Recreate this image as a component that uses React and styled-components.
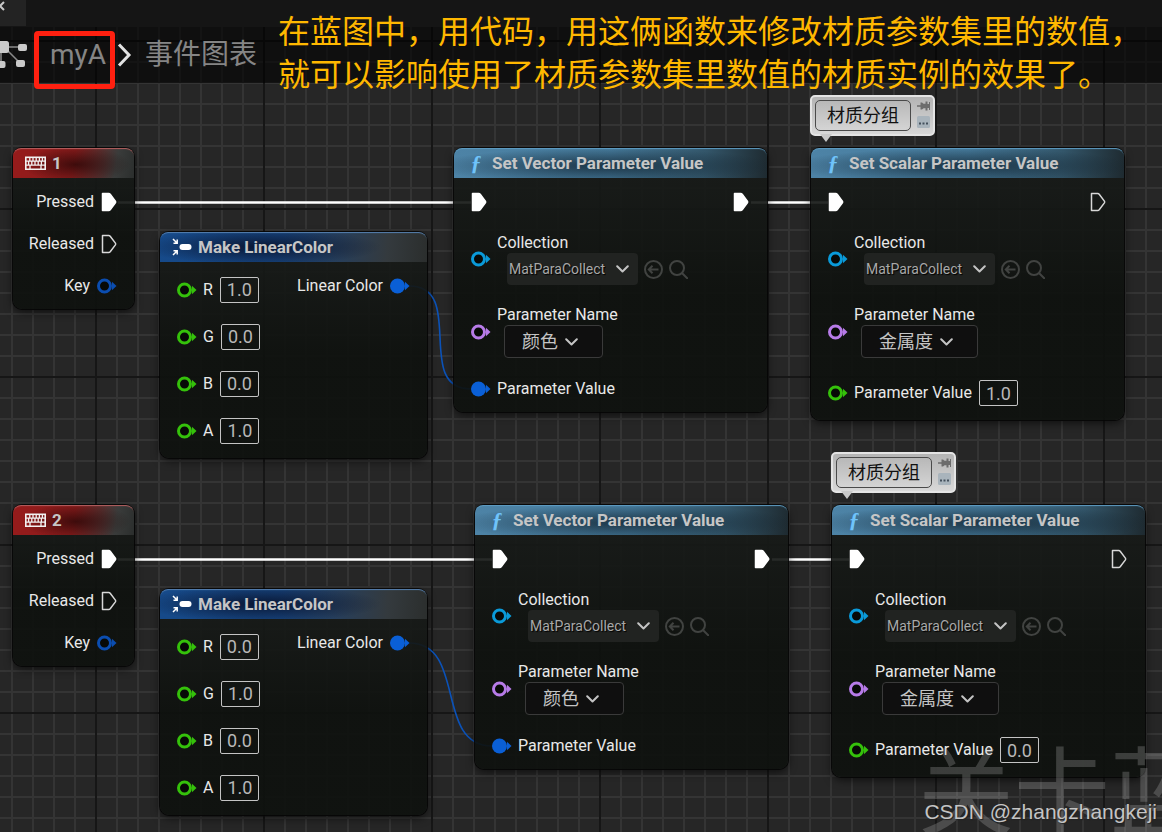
import React, { useState } from 'react'
import styled, { createGlobalStyle } from 'styled-components'

const Colors = {
  object: '#0a9ad9',
  name: '#b77be8',
  float: '#35c10b',
  struct: '#0a5fd6',
  key: '#0b4db0',
  text: '#e8e8e8',
  muted: '#b8b8b8',
}

const headers = {
  red: 'radial-gradient(ellipse 45% 60% at 52% 55%, rgba(30, 4, 4, 0.7), transparent), linear-gradient(100deg, #961b1b 0%, #8a1c1c 50%, #3a3c3b 84%, #2b2e2d 100%)',
  blue: 'radial-gradient(ellipse 45% 60% at 38% 50%, rgba(6, 12, 34, 0.8), transparent), linear-gradient(95deg, #164a8a 0%, #17437c 45%, #343a3e 85%, #2b2e2d 100%)',
  sky: 'radial-gradient(ellipse 55% 60% at 48% 60%, rgba(14, 30, 42, 0.75), transparent), linear-gradient(95deg, #4d83a6 0%, #467b9c 50%, #33566a 80%, #1e2a30 100%)',
}

const glows = {
  red: '#b56060',
  blue: '#5680b0',
  sky: '#5e9cc2',
}

const GlobalStyle = createGlobalStyle`
  * {
    box-sizing: border-box;
  }
  body {
    margin: 0;
    background: #262626;
    color: ${Colors.text};
    font: 16px/20px Roboto, "Noto Sans CJK SC", sans-serif;
  }
  button, input, select {
    font-family: inherit;
    margin: 0;
  }
  svg {
    flex-shrink: 0;
  }
`
const Graph = styled.main`
  position: relative;
  min-height: 100vh;
  overflow: hidden;
  background-color: #262626;
  background-image:
    linear-gradient(90deg, #161616 2px, transparent 2px),
    linear-gradient(#161616 2px, transparent 2px),
    linear-gradient(90deg, #343434 2px, transparent 2px),
    linear-gradient(#343434 2px, transparent 2px);
  background-size: 168px 168px, 168px 168px, 21px 21px, 21px 21px;
  background-position: 95px 0, 0 40px, 11px 0, 0 19px;
`
const TabStrip = styled.div`
  height: 27px;
  background: #151515;
`
const Tab = styled.button`
  display: block;
  width: 26px;
  height: 26px;
  padding: 0;
  border: none;
  background: #232323;
  svg {
    display: block;
    height: 26px;
  }
`
const Breadcrumb = styled.nav`
  display: flex;
  align-items: center;
  height: 56px;
  background: rgba(0, 0, 0, 0.6);
`
const Crumb = styled.a`
  position: relative;
  color: #858585;
  font-size: 28px;
  line-height: 40px;
  text-decoration: none;
`
const FirstCrumb = styled(Crumb)`
  margin: 0 11px 0 22px;
`
const LastCrumb = styled(Crumb)`
  margin-left: 13px;
`
const RedMark = styled.span`
  position: absolute;
  inset: -4px -9px -14px -16px;
  border: 5px solid #ff2010;
  border-radius: 4px;
`
const Annotation = styled.p`
  position: absolute;
  z-index: 2;
  top: 8px;
  left: 278px;
  margin: 0;
  color: #ffb800;
  font-family: "Noto Sans CJK SC", sans-serif;
  font-size: 32px;
  line-height: 43px;
  white-space: nowrap;
`
const Wires = styled.svg`
  position: absolute;
  inset: 0;
  width: 100%;
  height: 100%;
  fill: none;
`
const NodeBox = styled.section`
  position: absolute;
  left: ${({ $x }) => $x}px;
  top: ${({ $y }) => $y}px;
  width: ${({ $w }) => $w}px;
  border-radius: 9px;
  background: linear-gradient(rgba(25, 28, 26, 0.92), rgba(14, 17, 14, 0.92) 55%);
  box-shadow: 0 0 0 1px rgba(6, 6, 6, 0.9), 0 3px 8px rgba(0, 0, 0, 0.6);
`
const NodeHeader = styled.header`
  display: flex;
  align-items: center;
  gap: 6px;
  height: 30px;
  padding-left: 12px;
  border-radius: 8px 8px 0 0;
  background: ${({ $tone }) => headers[$tone]};
  box-shadow: inset 0 2px 1px -1px ${({ $tone }) => glows[$tone]};
`
const Title = styled.h2`
  margin: 0;
  color: #c6c6c6;
  font-size: 17px;
  font-weight: 700;
  line-height: 22px;
  white-space: nowrap;
`
const FunctionMark = styled.span`
  width: 20px;
  color: #6fc3fa;
  font: italic bold 22px/24px "Liberation Serif", serif;
  text-align: center;
`
const KeyRow = styled.div`
  display: flex;
  align-items: center;
  justify-content: flex-end;
  gap: 7px;
  height: 42px;
`
const KeyBody = styled.div`
  padding: 3px 17px 2px;
`
const MakeBody = styled.div`
  display: flex;
  justify-content: space-between;
  padding: 4px 17px 4px 17px;
`
const ChannelRow = styled.div`
  display: flex;
  align-items: center;
  gap: 6px;
  height: 47px;
`
const OutputRow = styled.div`
  display: flex;
  align-items: center;
  gap: 7px;
  height: 40px;
`
const SetBody = styled.div`
  display: flex;
  flex-direction: column;
  padding: 3px 18px 12px 17px;
`
const ExecRow = styled.div`
  display: flex;
  align-items: center;
  justify-content: space-between;
  height: 42px;
  margin-bottom: 10px;
`
const PinRow = styled.div`
  display: flex;
  align-items: center;
  gap: 6px;
  margin-bottom: 20px;
`
const ValueRow = styled.div`
  display: flex;
  align-items: center;
  gap: 6px;
  padding: ${({ $linked }) => ($linked ? '1px' : '2px')} 0;
`
const Controls = styled.div`
  display: flex;
  align-items: center;
  gap: 6px;
`
const Label = styled.label`
  display: block;
  color: ${Colors.text};
  white-space: nowrap;
`
const NumberBox = styled.input`
  width: 39px;
  height: 26px;
  margin-left: 1px;
  padding: 0;
  border: 1px solid #c4c4c4;
  border-radius: 2px;
  background: transparent;
  color: ${Colors.muted};
  font-size: 18px;
  text-align: center;
`
const SelectWrap = styled.span`
  position: relative;
  display: inline-flex;
  margin-left: ${({ $asset }) => ($asset ? '10px' : '7px')};
  svg {
    position: absolute;
    top: 50%;
    right: ${({ $asset }) => ($asset ? '9px' : '25px')};
    margin-top: -4px;
    pointer-events: none;
  }
`
const Select = styled.select`
  appearance: none;
  height: 33px;
  padding: 0 44px 0 17px;
  border: 1px solid #3a3a3a;
  border-radius: 4px;
  background: #0f0f0f;
  color: #c4c4c4;
  font-size: 18px;
`
const AssetSelect = styled(Select)`
  height: 32px;
  padding: 0 32px 0 2px;
  border: none;
  background: #212321;
  color: #a8a8a8;
  font-size: 14px;
  text-shadow: 1px 1px 1px #000;
`
const IconButton = styled.button`
  display: flex;
  padding: 0;
  border: none;
  background: none;
  color: #414341;
`
const Note = styled.div`
  position: absolute;
  top: -53px;
  left: -1px;
  display: flex;
  gap: 6px;
  padding: 3px;
  border: 2px solid #e4e4e4;
  border-radius: 5px;
  background: linear-gradient(#b4b4b4, #d8d8d8);
  &::after {
    content: "";
    position: absolute;
    top: 100%;
    left: 8px;
    border: 6px solid transparent;
    border-top: 8px solid #c9c9c9;
    border-bottom: none;
  }
`
const NoteInput = styled.input`
  width: 96px;
  height: 31px;
  padding: 0 0 3px;
  border: 1px solid #4a4a4a;
  border-radius: 5px;
  background: transparent;
  color: #111;
  font-size: 18px;
  text-align: center;
`
const NoteTools = styled.div`
  display: flex;
  flex-direction: column;
  gap: 4px;
  button {
    display: flex;
    padding: 0;
    border: none;
    background: none;
  }
`
const Backdrop = styled.div`
  position: absolute;
  right: -140px;
  bottom: -24px;
  color: rgba(200, 200, 200, 0.24);
  font: 96px/140px "Noto Sans CJK SC", sans-serif;
  white-space: nowrap;
  pointer-events: none;
`
const Credit = styled.div`
  position: absolute;
  right: 5px;
  bottom: 7px;
  color: #c4c4c4;
  font: 21px/26px "Liberation Sans", sans-serif;
  text-shadow: 1px 1px 1px #222;
`

const Pin = ({ color, filled }) => (
  <svg width="20" height="16" viewBox="0 0 20 16" aria-hidden="true">
    <circle cx="7.5" cy="8" r={filled ? 7.5 : 6} fill={filled ? color : '#070907'} stroke={filled ? 'none' : color} strokeWidth="3" />
    <path d="M15 3.8v8.4l4.5-4.2z" fill={color} />
  </svg>
)

const ExecPin = ({ filled }) => (
  <svg width="16" height="20" viewBox="0 0 16 20" aria-hidden="true">
    <path
      d="M1.5 1.5h6.2q.9 0 1.5.7l5.2 6.9q.6.9 0 1.8l-5.2 6.9q-.6.7-1.5.7H1.5z"
      fill={filled ? '#fff' : 'none'}
      stroke={filled ? '#fff' : '#d8d8d8'}
      strokeWidth="1.5"
      strokeLinejoin="round"
    />
  </svg>
)

const Chevron = () => (
  <svg width="13" height="8" viewBox="0 0 13 8" fill="none" stroke="#c4c4c4" strokeWidth="2" strokeLinecap="round" strokeLinejoin="round" aria-hidden="true">
    <path d="M1.2 1.2l5.3 5.3 5.3-5.3" />
  </svg>
)

const KeyboardIcon = () => (
  <svg width="21" height="14" viewBox="0 0 21 14" aria-hidden="true">
    <rect x="0.8" y="1.3" width="19.4" height="12" fill="none" stroke="#f2f2f2" strokeWidth="1.6" />
    <g stroke="#f2f2f2" strokeWidth="1.3">
      <path d="M1 5.2h19M1 9.2h19" />
      <path d="M4.8 1v4M8 1v4M11.2 1v4M14.4 1v4M17.4 1v4" />
      <path d="M3.6 5v4M6.8 5v4M10 5v4M13.200 5v4M16.400 5v4" />
      <path d="M5 9v4M16 9v4" />
    </g>
  </svg>
)

const MakeIcon = () => (
  <svg width="20" height="18" viewBox="0 0 20 18" aria-hidden="true">
    <rect x="7.5" y="6" width="12" height="6" rx="3" fill="#fff" />
    <path d="M1 1l3.5 3.5M5.2 1.5v3.7H1.5M1 17l3.5-3.5M5.2 16.5v-3.7H1.5" stroke="#fff" strokeWidth="1.5" fill="none" />
  </svg>
)

const ArrowIcon = () => (
  <svg width="19" height="19" viewBox="0 0 19 19" fill="none" stroke="currentColor" strokeWidth="2" aria-hidden="true">
    <circle cx="9.5" cy="9.5" r="8.5" />
    <path d="M14.5 9.5H5M8.5 5.8L4.8 9.5l3.7 3.7" />
  </svg>
)

const SearchIcon = () => (
  <svg width="19" height="19" viewBox="0 0 19 19" fill="none" stroke="currentColor" strokeWidth="2" strokeLinecap="round" aria-hidden="true">
    <circle cx="8" cy="8" r="7" />
    <path d="M13.2 13.2l5 5" />
  </svg>
)

const GraphIcon = () => (
  <svg width="28" height="32" viewBox="0 0 28 32" aria-hidden="true">
    <path d="M4 8h18M6 10l14 14M1 10v15" stroke="#8a8a8a" strokeWidth="1.5" fill="none" />
    <g fill="#c9c9c9">
      <rect x="-6" y="2" width="15" height="12" rx="2.5" />
      <rect x="18" y="5" width="9" height="7" rx="2" />
      <rect x="16" y="21" width="9" height="7" rx="2" />
      <rect x="-4" y="22" width="9.5" height="7" rx="2" />
    </g>
  </svg>
)

const NumberField = ({ id, value }) => {
  const [text, setText] = useState(value)
  return <NumberBox id={id} value={text} onChange={(e) => setText(e.target.value)} />
}

const KeyNode = ({ x, y, name }) => (
  <NodeBox $x={x} $y={y} $w={121}>
    <NodeHeader $tone="red">
      <KeyboardIcon />
      <Title>{name}</Title>
    </NodeHeader>
    <KeyBody>
      <KeyRow>Pressed <ExecPin filled /></KeyRow>
      <KeyRow>Released <ExecPin /></KeyRow>
      <KeyRow>Key <Pin color={Colors.key} /></KeyRow>
    </KeyBody>
  </NodeBox>
)

const MakeColorNode = ({ x, y, id, channels }) => (
  <NodeBox $x={x} $y={y} $w={267}>
    <NodeHeader $tone="blue">
      <MakeIcon />
      <Title>Make LinearColor</Title>
    </NodeHeader>
    <MakeBody>
      <div>
        {channels.map(([channel, value]) => (
          <ChannelRow key={channel}>
            <Pin color={Colors.float} />
            <Label htmlFor={`${id}-${channel}`}>{channel}</Label>
            <NumberField id={`${id}-${channel}`} value={value} />
          </ChannelRow>
        ))}
      </div>
      <OutputRow>Linear Color <Pin color={Colors.struct} filled /></OutputRow>
    </MakeBody>
  </NodeBox>
)

const SetNode = ({ x, y, id, title, parameter, value, note }) => (
  <NodeBox $x={x} $y={y} $w={313}>
    {note && (
      <Note>
        <NoteInput aria-label="Comment" defaultValue={note} />
        <NoteTools>
          <button type="button" aria-label="Pin comment">
            <svg width="13" height="12" viewBox="0 0 13 12" fill="#6c6c6c">
              <path d="M0 5.300h3.500V2.500h1.500l1.500 1.200h2V1.500H10.500V4H12V2h1v8h-1V8h-1.500v2.500H8.500V8.300h-2L5 9.500H3.500V6.700H0z" />
            </svg>
          </button>
          <button type="button" aria-label="Toggle comment">
            <svg width="13" height="13" viewBox="0 0 13 13">
              <rect width="13" height="12" rx="1.5" fill="#a9b4bc" />
              <path d="M2 7.5h2M5.5 7.5h2M9 7.5h2" stroke="#44505c" strokeWidth="2" />
            </svg>
          </button>
        </NoteTools>
      </Note>
    )}
    <NodeHeader $tone="sky">
      <FunctionMark>ƒ</FunctionMark>
      <Title>{title}</Title>
    </NodeHeader>
    <SetBody>
      <ExecRow>
        <ExecPin filled />
        <ExecPin filled={!note} />
      </ExecRow>
      <PinRow>
        <Pin color={Colors.object} />
        <div>
          <Label htmlFor={`${id}-collection`}>Collection</Label>
          <Controls>
            <SelectWrap $asset>
              <AssetSelect id={`${id}-collection`}>
                <option>MatParaCollect</option>
              </AssetSelect>
              <Chevron />
            </SelectWrap>
            <IconButton type="button" aria-label="Use selected asset"><ArrowIcon /></IconButton>
            <IconButton type="button" aria-label="Browse to asset"><SearchIcon /></IconButton>
          </Controls>
        </div>
      </PinRow>
      <PinRow>
        <Pin color={Colors.name} />
        <div>
          <Label htmlFor={`${id}-name`}>Parameter Name</Label>
          <Controls>
            <SelectWrap>
              <Select id={`${id}-name`}>
                <option>{parameter}</option>
              </Select>
              <Chevron />
            </SelectWrap>
          </Controls>
        </div>
      </PinRow>
      {value ? (
        <ValueRow>
          <Pin color={Colors.float} />
          <Label htmlFor={`${id}-value`}>Parameter Value</Label>
          <NumberField id={`${id}-value`} value={value} />
        </ValueRow>
      ) : (
        <ValueRow $linked>
          <Pin color={Colors.struct} filled />
          <span>Parameter Value</span>
        </ValueRow>
      )}
    </SetBody>
  </NodeBox>
)

const rows = [
  { name: '1', y: 148, setX: 454, channels: [['R', '1.0'], ['G', '0.0'], ['B', '0.0'], ['A', '1.0']], metal: '1.0' },
  { name: '2', y: 505, setX: 475, channels: [['R', '0.0'], ['G', '1.0'], ['B', '0.0'], ['A', '1.0']], metal: '0.0' },
]

export default function App() {
  return (
    <>
      <GlobalStyle />
      <Graph>
        <TabStrip>
          <Tab type="button" aria-label="Close tab">
            <svg width="8" viewBox="0 0 8 26" stroke="#c9c9c9" strokeWidth="2">
              <path d="M-4 10l8-8M-4 2l8 8" />
            </svg>
          </Tab>
        </TabStrip>
        <Breadcrumb>
          <GraphIcon />
          <FirstCrumb href="#myA">myA<RedMark /></FirstCrumb>
          <svg width="15" height="24" viewBox="0 0 15 24" fill="none" stroke="#e2e2e2" strokeWidth="3" aria-hidden="true">
            <path d="M2 1.5L12 12 2 22.5" />
          </svg>
          <LastCrumb href="#graph">事件图表</LastCrumb>
        </Breadcrumb>
        <Wires aria-hidden="true">
          {rows.map(({ name, y, setX }) => (
            <g key={name}>
              <path d={`M118 ${y + 54.5}H${setX + 17}M${setX + 297} ${y + 54.5}H${setX + 374}`} stroke="#fff" strokeWidth="2.5" />
              <path
                d={`M409 ${y + 138}C467 ${y + 138} ${setX - 41} ${y + 241} ${setX + 17} ${y + 241}`}
                stroke="#0b52b8"
                strokeWidth="1.6"
              />
            </g>
          ))}
        </Wires>
        {rows.map(({ name, y, setX, channels, metal }) => (
          <React.Fragment key={name}>
            <KeyNode x={13} y={y} name={name} />
            <MakeColorNode x={160} y={y + 84} id={`make-${name}`} channels={channels} />
            <SetNode x={setX} y={y} id={`vector-${name}`} title="Set Vector Parameter Value" parameter="颜色" />
            <SetNode
              x={setX + 357}
              y={y}
              id={`scalar-${name}`}
              title="Set Scalar Parameter Value"
              parameter="金属度"
              value={metal}
              note="材质分组"
            />
          </React.Fragment>
        ))}
        <Annotation>
          在蓝图中，用代码，用这俩函数来修改材质参数集里的数值，<br />
          就可以影响使用了材质参数集里数值的材质实例的效果了。
        </Annotation>
        <Backdrop>关卡蓝图</Backdrop>
        <Credit>CSDN @zhangzhangkeji</Credit>
      </Graph>
    </>
  )
}
